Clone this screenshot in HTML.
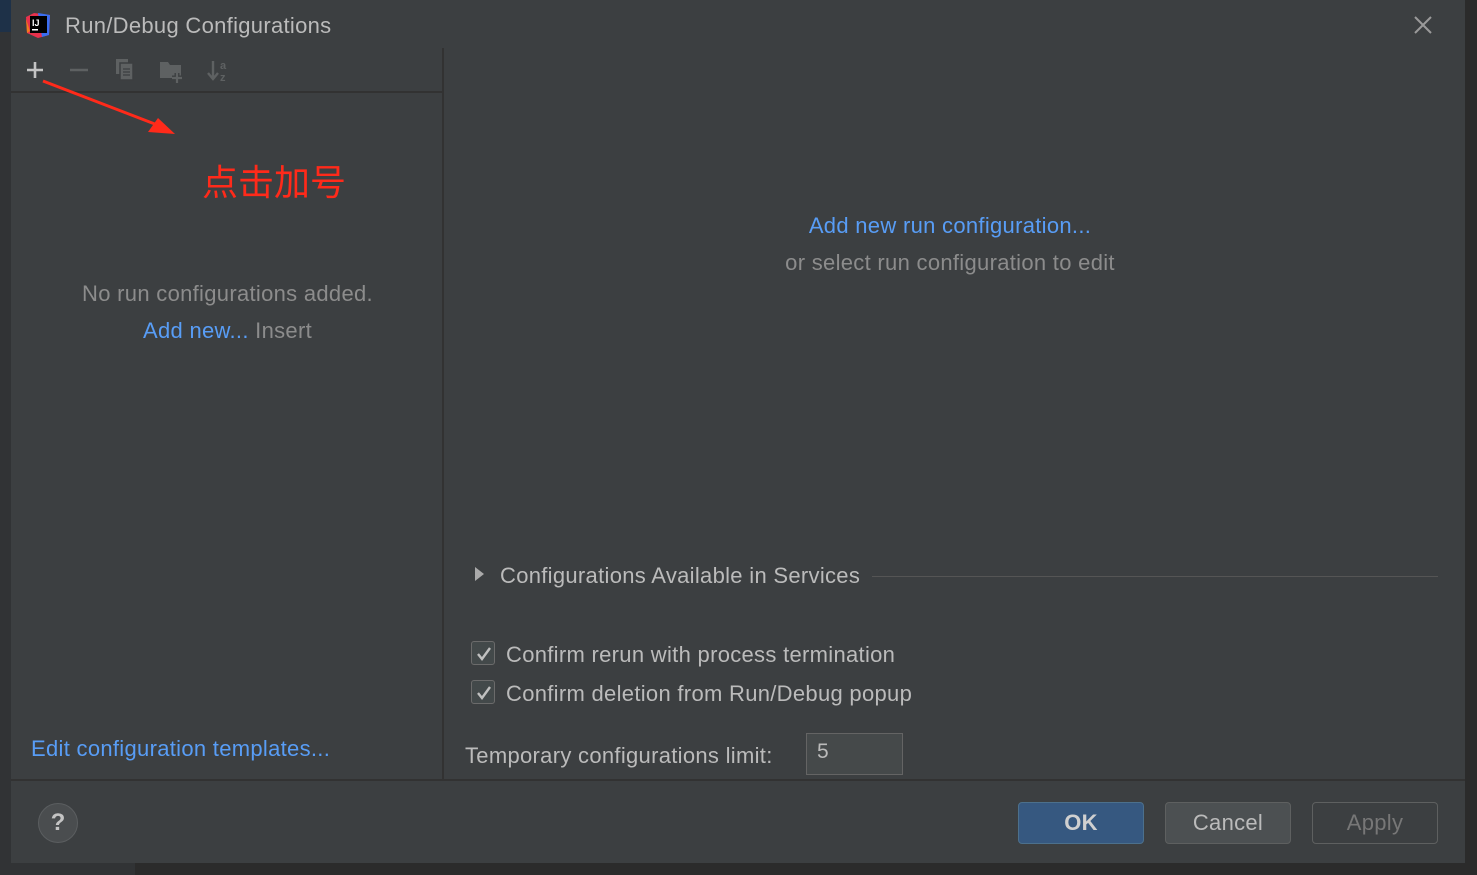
<!DOCTYPE html>
<html><head><meta charset="utf-8"><style>
*{margin:0;padding:0;box-sizing:border-box}
body{width:1477px;height:875px;background:#2b2b2b;position:relative;overflow:hidden;font-family:"Liberation Sans","Noto Sans CJK SC",sans-serif;color:#bbbbbb}
.abs{position:absolute}
.dlg{left:11px;top:0;width:1454px;height:863px;background:#3c3f41}
.t{font-size:22px;letter-spacing:0.3px;white-space:nowrap}
.link{color:#589df6}
.btn{position:absolute;top:802px;width:126px;height:42px;border-radius:4px;font-size:22px;letter-spacing:0.3px;text-align:center;line-height:40px}
.cb{position:absolute;left:471px;width:24px;height:24px;border:1px solid #6b6b6b;border-radius:3px;background:#43494a}
</style></head><body>
<div class="abs" style="left:0;top:0;width:11px;height:32px;background:#1e3148"></div>
<div class="abs" style="left:0;top:32px;width:11px;height:843px;background:#313335"></div>
<div class="abs" style="left:135px;top:863px;width:1342px;height:12px;background:#2b2b2b"></div>
<div class="abs" style="left:0;top:863px;width:135px;height:12px;background:#313335"></div>
<div class="abs dlg"></div>

<!-- title -->
<svg class="abs" style="left:24px;top:11px" width="28" height="28" viewBox="0 0 28 28">
<path d="M2 6 L10 2 L26 4 L25 24 L14 27 L3 22 Z" fill="#e8314c"/>
<path d="M14 2 L26 4 L25 24 L18 26 Z" fill="#3a6df0"/>
<path d="M2 8 L6 20 L3 22 Z" fill="#f27a1c"/>
<rect x="6" y="5" width="17" height="17" fill="#000"/>
<text x="8" y="15" font-family="Liberation Sans" font-weight="bold" font-size="9" fill="#fff">IJ</text>
<rect x="8" y="18" width="6" height="1.5" fill="#fff"/>
</svg>
<div class="abs t" style="left:65px;top:13px;color:#bbbbbb">Run/Debug Configurations</div>
<svg class="abs" style="left:1413px;top:15px" width="20" height="20"><path d="M2 2L18 18M18 2L2 18" stroke="#9a9a9a" stroke-width="2"/></svg>

<!-- toolbar -->
<svg class="abs" style="left:24px;top:58px" width="220" height="26">
<path d="M3 12H19M11 4V20" stroke="#c4c4c4" stroke-width="2.6"/>
<path d="M46 12H64" stroke="#5e6162" stroke-width="2.6"/>
<rect x="92" y="1" width="12" height="15" fill="#5e6162"/><rect x="96" y="5" width="13" height="17" fill="#5e6162" stroke="#3c3f41" stroke-width="1.5"/>
<path d="M99 11h7M99 14h7M99 17h7" stroke="#3c3f41" stroke-width="1.3"/>
<path d="M136 4h8l2 3h11v13h-21z" fill="#5e6162"/>
<path d="M153 15v10M148 20h10" stroke="#3c3f41" stroke-width="5"/>
<path d="M153 15v10M148 20h10" stroke="#5e6162" stroke-width="2.2"/>
<path d="M189 3v17M184 15l5 6 5-6" stroke="#5e6162" stroke-width="2.4" fill="none"/>
<text x="196" y="11" font-size="11" fill="#5e6162" font-family="Liberation Sans" font-weight="bold">a</text>
<text x="196" y="23" font-size="11" fill="#5e6162" font-family="Liberation Sans" font-weight="bold">z</text>
</svg>
<div class="abs" style="left:11px;top:91px;width:432px;height:2px;background:#323232"></div>
<div class="abs" style="left:442px;top:48px;width:2px;height:732px;background:#323232"></div>

<!-- arrow -->
<svg class="abs" style="left:40px;top:78px" width="140" height="62">
<path d="M3 3 L120 48" stroke="#ff2a1a" stroke-width="3"/>
<path d="M135 56 L108 54 L118 40 Z" fill="#ff2a1a"/>
</svg>
<div class="abs" style="left:202px;top:156px;font-size:36px;color:#ff2a1a;font-family:'Noto Sans CJK SC',sans-serif;line-height:48px">点击加号</div>

<div class="abs t" style="left:0;width:455px;text-align:center;top:281px;color:#8c8c8c">No run configurations added.</div>
<div class="abs t" style="left:0;width:455px;text-align:center;top:318px;color:#8c8c8c"><span class="link">Add new...</span> Insert</div>
<div class="abs t link" style="left:31px;top:736px">Edit configuration templates...</div>

<!-- right -->
<div class="abs t link" style="left:444px;width:1012px;text-align:center;top:213px">Add new run configuration...</div>
<div class="abs t" style="left:444px;width:1012px;text-align:center;top:250px;color:#8c8c8c">or select run configuration to edit</div>

<svg class="abs" style="left:474px;top:566px" width="12" height="16"><path d="M1 1L10 8L1 15Z" fill="#aaaaaa"/></svg>
<div class="abs t" style="left:500px;top:563px">Configurations Available in Services</div>
<div class="abs" style="left:872px;top:576px;width:566px;height:1px;background:#555"></div>

<div class="cb" style="top:641px"></div>
<svg class="abs" style="left:475px;top:645px" width="18" height="18"><path d="M3 9L7 14L15 3" stroke="#c0c0c0" stroke-width="2.4" fill="none"/></svg>
<div class="abs t" style="left:506px;top:642px">Confirm rerun with process termination</div>
<div class="cb" style="top:680px"></div>
<svg class="abs" style="left:475px;top:684px" width="18" height="18"><path d="M3 9L7 14L15 3" stroke="#c0c0c0" stroke-width="2.4" fill="none"/></svg>
<div class="abs t" style="left:506px;top:681px">Confirm deletion from Run/Debug popup</div>

<div class="abs t" style="left:465px;top:743px">Temporary configurations limit:</div>
<div class="abs" style="left:806px;top:733px;width:97px;height:42px;border:1px solid #646464;background:#45494a;font-size:21px;padding:6px 0 0 10px">5</div>

<!-- footer -->
<div class="abs" style="left:11px;top:779px;width:1454px;height:2px;background:#323232"></div>
<div class="abs" style="left:38px;top:803px;width:40px;height:40px;border-radius:50%;border:1px solid #5b5e60;background:#4a4d4f;color:#c4c4c4;font-size:24px;font-weight:bold;text-align:center;line-height:38px">?</div>
<div class="btn" style="left:1018px;background:#365880;border:1px solid #4c708c;color:#d0d0d0;font-weight:bold">OK</div>
<div class="btn" style="left:1165px;background:#4c5052;border:1px solid #5e6060;color:#bbbbbb">Cancel</div>
<div class="btn" style="left:1312px;background:#3c3f41;border:1px solid #5e6060;color:#777777">Apply</div>
</body></html>
